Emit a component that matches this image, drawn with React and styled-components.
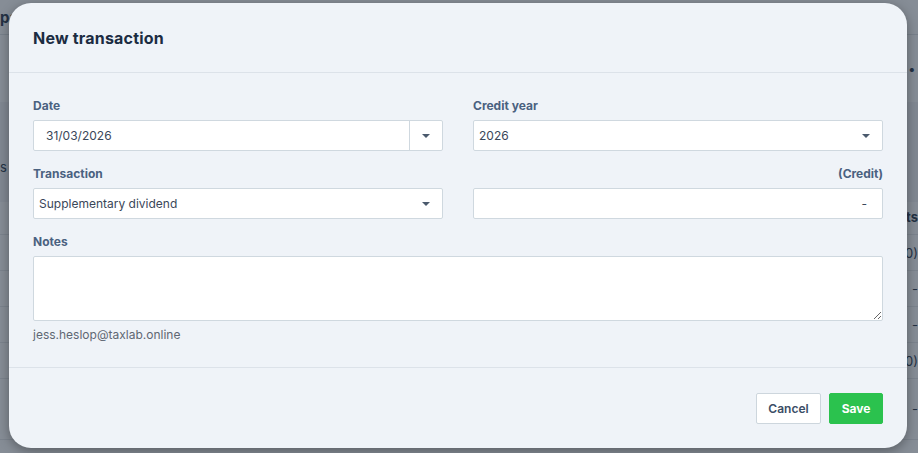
import React from "react";
import styled, { createGlobalStyle } from "styled-components";

const Global = createGlobalStyle`
  html, body { margin: 0; padding: 0; }
  body { font-family: Inter, "Noto Sans", sans-serif; background: #f1f4f8; }
  #root { width: 918px; height: 453px; position: relative; overflow: hidden; }
`;

const Page = styled.div`
  width: 918px;
  height: 453px;
  background: #f1f4f8;
  color: #2c3e55;
  font-size: 13px;
`;

const PageTop = styled.div`
  height: 34px;
  display: flex;
  align-items: center;
  font-weight: 700;
  font-size: 15px;
`;

const PageSub = styled.div`
  height: 68px;
  border-top: 1px solid #d5dce3;
  box-sizing: border-box;
  display: flex;
  justify-content: flex-end;
  align-items: center;
  letter-spacing: 3px;
  font-weight: 700;
`;

const Side = styled.div`
  height: 100px;
  background: #e6ebf1;
  display: flex;
  align-items: center;
  padding-top: 30px;
  box-sizing: border-box;
`;

const Table = styled.div`
  display: flex;
  flex-direction: column;
  margin-top: -3px;
`;

const TRow = styled.div`
  height: ${(p) => p.$h || 35}px;
  border-bottom: 1px solid #dbe1e7;
  display: grid;
  grid-template-columns: 1fr 120px 130px 140px;
  align-items: center;
  font-weight: ${(p) => (p.$head ? 700 : 400)};
  & > span { text-align: right; }
`;

const Overlay = styled.div`
  position: absolute;
  inset: 0;
  background: rgba(28, 38, 52, 0.5);
`;

const Modal = styled.div`
  position: absolute;
  left: 9px;
  top: 3px;
  width: 898px;
  height: 445px;
  background: #eff3f8;
  border-radius: 22px;
  box-shadow: 0 3px 12px rgba(0, 0, 0, 0.35);
  display: flex;
  flex-direction: column;
  overflow: hidden;
`;

const Header = styled.div`
  height: 69px;
  padding: 0 24px;
  display: flex;
  align-items: center;
  border-bottom: 1px solid #dce2e9;
  flex-shrink: 0;
`;

const Title = styled.h2`
  margin: 0;
  font-family: Inter, "Noto Sans", sans-serif;
  font-size: 16px;
  font-weight: 700;
  color: #1b2c42;
  letter-spacing: 0.2px;
`;

const Body = styled.div`
  flex: 1;
  padding: 25px 24px 0;
  display: grid;
  grid-template-columns: 410px 410px;
  column-gap: 30px;
  row-gap: 15px;
  align-content: start;
  border-bottom: 1px solid #dce2e9;
`;

const Field = styled.div`
  display: flex;
  flex-direction: column;
  grid-column: ${(p) => (p.$full ? "1 / span 2" : "auto")};
`;

const Label = styled.label`
  font-size: 12px;
  line-height: 16px;
  font-weight: 700;
  color: #4a6180;
  margin-bottom: 6px;
  text-align: ${(p) => (p.$right ? "right" : "left")};
`;

const Box = styled.div`
  height: 31px;
  box-sizing: border-box;
  background: #fff;
  border: 1px solid #cfd8df;
  border-radius: 2px;
  display: flex;
  align-items: center;
  font-size: 12px;
  color: #3a4759;
`;

const Value = styled.span`
  flex: 1;
  padding-left: ${(p) => p.$pad || 5}px;
  text-align: ${(p) => (p.$right ? "right" : "left")};
  padding-right: ${(p) => (p.$right ? 15 : 0)}px;
`;

const Addon = styled.div`
  width: 32px;
  height: 100%;
  border-left: 1px solid #cfd8df;
  display: flex;
  align-items: center;
  justify-content: center;
`;

const CaretWrap = styled.div`
  width: 32px;
  display: flex;
  align-items: center;
  justify-content: center;
`;

const Caret = styled.span`
  width: 0;
  height: 0;
  border-left: 4px solid transparent;
  border-right: 4px solid transparent;
  border-top: 4px solid #4b5a6d;
`;

const TextArea = styled.textarea`
  height: 65px;
  box-sizing: border-box;
  background: #fff;
  border: 1px solid #cfd8df;
  border-radius: 2px;
  resize: vertical;
  font-family: inherit;
  outline: none;
  margin: 0;
`;

const Meta = styled.div`
  margin-top: 6px;
  font-size: 12px;
  color: #5f6773;
`;

const Footer = styled.div`
  height: 80px;
  flex-shrink: 0;
  padding: 0 24px;
  display: flex;
  justify-content: flex-end;
  align-items: center;
  gap: 8px;
`;

const Button = styled.button`
  height: 31px;
  width: ${(p) => (p.$primary ? 54 : 65)}px;
  box-sizing: border-box;
  padding: 0;
  border-radius: 2px;
  font-family: inherit;
  font-size: 12px;
  font-weight: ${(p) => (p.$primary ? 700 : 600)};
  border: 1px solid ${(p) => (p.$primary ? "#2bc24e" : "#cdd6dd")};
  background: ${(p) => (p.$primary ? "#2bc24e" : "#fff")};
  color: ${(p) => (p.$primary ? "#fff" : "#3b4e66")};
`;

export default function App() {
  return (
    <>
      <Global />
      <Page>
        <PageTop>pa</PageTop>
        <PageSub>•••</PageSub>
        <Side>s</Side>
        <Table>
          <TRow $head><span></span><span></span><span></span><span>ts</span></TRow>
          <TRow><span></span><span></span><span></span><span>(100.00)</span></TRow>
          <TRow><span></span><span></span><span></span><span>-</span></TRow>
          <TRow><span></span><span></span><span></span><span>-</span></TRow>
          <TRow><span></span><span></span><span></span><span>(100.00)</span></TRow>
          <TRow $h={60}><span></span><span></span><span></span><span>-</span></TRow>
          <TRow><span></span><span>N/A</span><span>100.00</span><span>100.00</span></TRow>
        </Table>
      </Page>
      <Overlay />
      <Modal>
        <Header>
          <Title>New transaction</Title>
        </Header>
        <Body>
          <Field>
            <Label>Date</Label>
            <Box>
              <Value $pad={12}>31/03/2026</Value>
              <Addon><Caret /></Addon>
            </Box>
          </Field>
          <Field>
            <Label>Credit year</Label>
            <Box>
              <Value>2026</Value>
              <CaretWrap><Caret /></CaretWrap>
            </Box>
          </Field>
          <Field>
            <Label>Transaction</Label>
            <Box>
              <Value>Supplementary dividend</Value>
              <CaretWrap><Caret /></CaretWrap>
            </Box>
          </Field>
          <Field>
            <Label $right>(Credit)</Label>
            <Box>
              <Value $right>-</Value>
            </Box>
          </Field>
          <Field $full>
            <Label>Notes</Label>
            <TextArea />
            <Meta>jess.heslop@taxlab.online</Meta>
          </Field>
        </Body>
        <Footer>
          <Button>Cancel</Button>
          <Button $primary>Save</Button>
        </Footer>
      </Modal>
    </>
  );
}
